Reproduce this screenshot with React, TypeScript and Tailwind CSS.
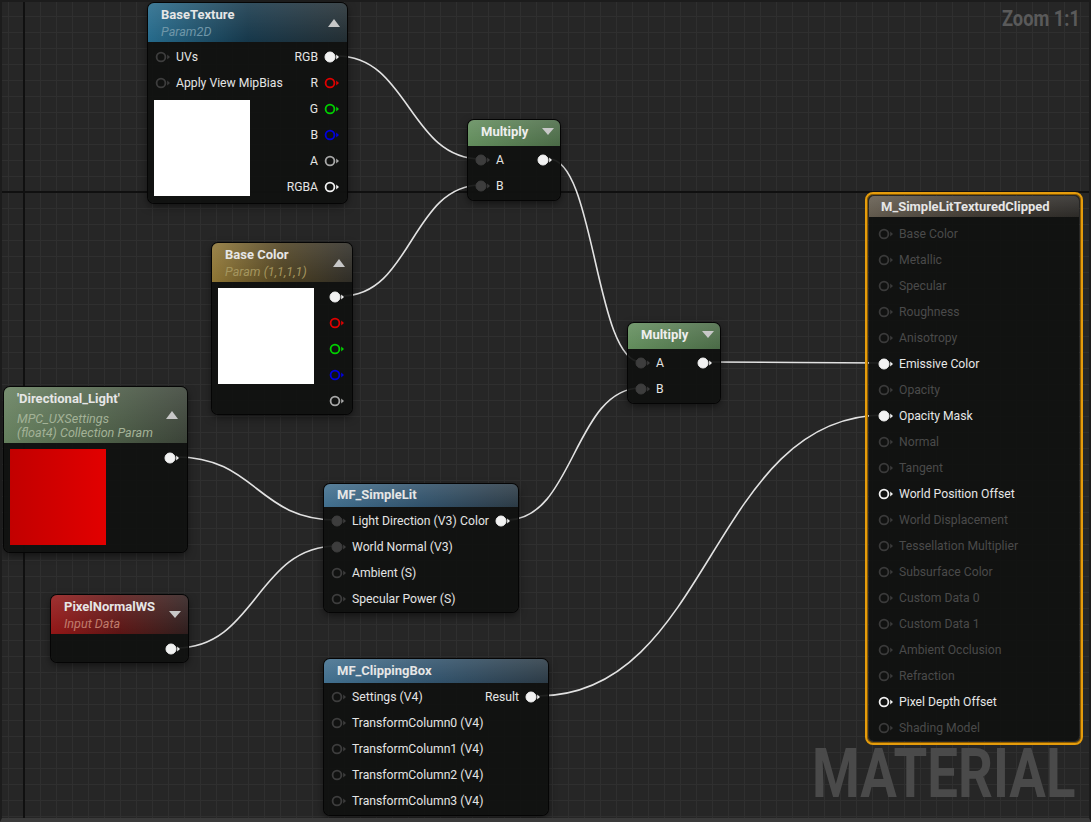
import React from 'react';

type PinProps = { color: string; filled?: boolean };

function Pin({ color, filled }: PinProps) {
  return (
    <svg width="16" height="12" viewBox="0 0 16 12" className="shrink-0">
      <circle
        cx="6"
        cy="6"
        r={filled ? 5 : 4.4}
        fill={filled ? color : 'none'}
        stroke={color}
        strokeWidth={filled ? 1 : 1.8}
      />
      <path d="M12.2 3.6 L15 6 L12.2 8.4 Z" fill={color} />
    </svg>
  );
}

const WHITE = '#f2f2f2';
const DIM = '#3d3d3d';

function InRow({ label, pin, dim }: { label: string; pin: React.ReactNode; dim?: boolean }) {
  return (
    <div className="flex h-[26px] items-center gap-[5px] pl-[7px]">
      {pin}
      <span className={dim ? 'text-[#4a4a4a]' : 'text-[#e4e4e4]'}>{label}</span>
    </div>
  );
}

function OutRow({ label, pin }: { label?: string; pin: React.ReactNode }) {
  return (
    <div className="flex h-[26px] items-center justify-end gap-[6px] pr-[7px]">
      {label && <span className="text-[#e4e4e4]">{label}</span>}
      {pin}
    </div>
  );
}

function Arrow({ up }: { up?: boolean }) {
  return (
    <svg width="12" height="8" viewBox="0 0 12 8" className="shrink-0">
      {up ? <path d="M0 8 L6 0 L12 8 Z" fill="#c4c4c4" /> : <path d="M0 0 L12 0 L6 7 Z" fill="#c4c4c4" />}
    </svg>
  );
}

function Node({ pos, children }: { pos: string; children: React.ReactNode }) {
  return (
    <div
      className={`absolute ${pos} rounded-[6px] bg-[#101110]/[0.93] shadow-[0_0_0_1px_#050505,0_3px_8px_rgba(0,0,0,0.55)]`}
    >
      {children}
    </div>
  );
}

// wire endpoints: output pin centre -> input pin centre
const wires: [number, number, number, number][] = [
  [337, 56, 481, 159],
  [342, 296, 481, 185],
  [549, 159, 641, 362],
  [507, 520, 641, 388],
  [710, 362, 884, 363],
  [176, 457, 337, 520],
  [176, 648, 337, 546],
  [538, 696, 884, 415],
];

function wirePath([x1, y1, x2, y2]: [number, number, number, number]) {
  const d = Math.max(Math.abs(x2 - x1) * 0.5, 30);
  return `M${x1} ${y1} C${x1 + d} ${y1} ${x2 - d} ${y2} ${x2} ${y2}`;
}

const materialInputs: { label: string; state: 'off' | 'linked' | 'open' }[] = [
  { label: 'Base Color', state: 'off' },
  { label: 'Metallic', state: 'off' },
  { label: 'Specular', state: 'off' },
  { label: 'Roughness', state: 'off' },
  { label: 'Anisotropy', state: 'off' },
  { label: 'Emissive Color', state: 'linked' },
  { label: 'Opacity', state: 'off' },
  { label: 'Opacity Mask', state: 'linked' },
  { label: 'Normal', state: 'off' },
  { label: 'Tangent', state: 'off' },
  { label: 'World Position Offset', state: 'open' },
  { label: 'World Displacement', state: 'off' },
  { label: 'Tessellation Multiplier', state: 'off' },
  { label: 'Subsurface Color', state: 'off' },
  { label: 'Custom Data 0', state: 'off' },
  { label: 'Custom Data 1', state: 'off' },
  { label: 'Ambient Occlusion', state: 'off' },
  { label: 'Refraction', state: 'off' },
  { label: 'Pixel Depth Offset', state: 'open' },
  { label: 'Shading Model', state: 'off' },
];

const gloss = 'pointer-events-none absolute inset-0 rounded-t-[6px] bg-linear-to-b from-white/12 to-transparent';

export default function App() {
  return (
    <div className="relative h-[822px] w-[1091px] overflow-hidden bg-[#262626] bg-[linear-gradient(to_right,#2f2f2f_1px,transparent_1px),linear-gradient(to_bottom,#2f2f2f_1px,transparent_1px)] bg-size-[16px_16px] bg-position-[8px_0px] font-['Roboto',sans-serif] text-[12.2px] text-[#e4e4e4]">
      {/* origin axes */}
      <div className="absolute left-[23px] top-0 h-full w-[2px] bg-[#101010]" />
      <div className="absolute left-0 top-[191px] h-[2px] w-full bg-[#101010]" />

      {/* watermarks */}
      <div className="absolute right-[11px] top-[8px] origin-right scale-x-[0.83] text-[22px] font-bold leading-none text-[#5a5a5a]">
        Zoom 1:1
      </div>
      <div className="absolute left-[812px] top-[739px] origin-left scale-x-[0.79] text-[69px] font-bold leading-none text-[#4a4a4a]">
        MATERIAL
      </div>

      {/* wires */}
      <svg className="pointer-events-none absolute inset-0" width="1091" height="822">
        {wires.map((w, i) => (
          <path key={i} d={wirePath(w)} fill="none" stroke="#e2e2e2" strokeWidth="1.6" />
        ))}
      </svg>

      {/* BaseTexture */}
      <Node pos="left-[148px] top-[3px] w-[199px] h-[200px]">
        <div className="relative flex h-[39px] items-center justify-between rounded-t-[6px] bg-linear-to-r from-[#256a8b] via-[#15374a] to-[#222d32] pl-[13px] pr-[7px]">
          <div className={gloss} />
          <div className="relative pt-[1px]">
            <div className="text-[13px] font-bold leading-[16px] text-[#e6e6e6]">BaseTexture</div>
            <div className="mt-[1px] text-[12.6px] italic leading-[16px] text-[#6f96a8]">Param2D</div>
          </div>
          <Arrow up />
        </div>
        <div className="flex pt-[2px]">
          <div className="flex-1">
            <InRow label="UVs" pin={<Pin color={DIM} />} />
            <InRow label="Apply View MipBias" pin={<Pin color={DIM} />} />
            <div className="ml-[6px] mt-[4px] h-[96px] w-[96px] bg-white" />
          </div>
          <div>
            <OutRow label="RGB" pin={<Pin color={WHITE} filled />} />
            <OutRow label="R" pin={<Pin color="#e00000" />} />
            <OutRow label="G" pin={<Pin color="#00d000" />} />
            <OutRow label="B" pin={<Pin color="#0000e0" />} />
            <OutRow label="A" pin={<Pin color="#a8a8a8" />} />
            <OutRow label="RGBA" pin={<Pin color={WHITE} />} />
          </div>
        </div>
      </Node>

      {/* Base Color */}
      <Node pos="left-[212px] top-[243px] w-[140px] h-[171px]">
        <div className="relative flex h-[39px] items-center justify-between rounded-t-[6px] bg-linear-to-r from-[#8e7534] via-[#4d401f] to-[#2e2c26] pl-[13px] pr-[7px]">
          <div className={gloss} />
          <div className="relative pt-[1px]">
            <div className="text-[13px] font-bold leading-[16px] text-[#e6e6e6]">Base Color</div>
            <div className="mt-[1px] text-[12.6px] italic leading-[16px] text-[#a4955e]">Param (1,1,1,1)</div>
          </div>
          <Arrow up />
        </div>
        <div className="flex pt-[2px]">
          <div className="flex-1">
            <div className="ml-[6px] mt-[4px] h-[96px] w-[96px] bg-white" />
          </div>
          <div>
            <OutRow pin={<Pin color={WHITE} filled />} />
            <OutRow pin={<Pin color="#e00000" />} />
            <OutRow pin={<Pin color="#00d000" />} />
            <OutRow pin={<Pin color="#0000e0" />} />
            <OutRow pin={<Pin color="#a8a8a8" />} />
          </div>
        </div>
      </Node>

      {/* Directional_Light */}
      <Node pos="left-[4px] top-[387px] w-[183px] h-[165px]">
        <div className="relative flex h-[56px] items-center justify-between rounded-t-[6px] bg-linear-to-r from-[#657f5d] via-[#4e6148] to-[#3a4237] pl-[13px] pr-[9px]">
          <div className={gloss} />
          <div className="relative pt-[1px]">
            <div className="text-[13px] font-bold leading-[16px] text-[#e6e6e6]">'Directional_Light'</div>
            <div className="mt-[5px] text-[12.6px] italic leading-[14px] text-[#a3b297]">
              MPC_UXSettings
              <br />
              (float4) Collection Param
            </div>
          </div>
          <Arrow up />
        </div>
        <div className="flex pt-[2px]">
          <div className="flex-1">
            <div className="ml-[6px] mt-[4px] h-[96px] w-[96px] bg-linear-to-r from-[#c20000] to-[#e20000]" />
          </div>
          <div>
            <OutRow pin={<Pin color={WHITE} filled />} />
          </div>
        </div>
      </Node>

      {/* PixelNormalWS */}
      <Node pos="left-[51px] top-[595px] w-[137px] h-[67px]">
        <div className="relative flex h-[39px] items-center justify-between rounded-t-[6px] bg-linear-to-r from-[#921616] via-[#5c1414] to-[#2e1d1d] pl-[13px] pr-[7px]">
          <div className={gloss} />
          <div className="relative pt-[1px]">
            <div className="text-[13px] font-bold leading-[16px] text-[#e6e6e6]">PixelNormalWS</div>
            <div className="mt-[1px] text-[12.6px] italic leading-[16px] text-[#c07c6c]">Input Data</div>
          </div>
          <Arrow />
        </div>
        <div className="pt-[2px]">
          <OutRow pin={<Pin color={WHITE} filled />} />
        </div>
      </Node>

      {/* Multiply 1 */}
      <Node pos="left-[468px] top-[120px] w-[92px] h-[80px]">
        <div className="relative flex h-[26px] items-start justify-between rounded-t-[6px] bg-linear-to-r from-[#628d5c] to-[#4a6a46] pl-[13px] pr-[6px] pt-[4px]">
          <div className={gloss} />
          <div className="relative text-[13px] font-bold leading-[16px] text-[#eeeeee]">Multiply</div>
          <div className="mt-[4px]">
            <Arrow />
          </div>
        </div>
        <div className="flex justify-between pt-[1px]">
          <InRow label="A" pin={<Pin color={DIM} filled />} />
          <OutRow pin={<Pin color={WHITE} filled />} />
        </div>
        <InRow label="B" pin={<Pin color={DIM} filled />} />
      </Node>

      {/* Multiply 2 */}
      <Node pos="left-[628px] top-[323px] w-[92px] h-[80px]">
        <div className="relative flex h-[26px] items-start justify-between rounded-t-[6px] bg-linear-to-r from-[#628d5c] to-[#4a6a46] pl-[13px] pr-[6px] pt-[4px]">
          <div className={gloss} />
          <div className="relative text-[13px] font-bold leading-[16px] text-[#eeeeee]">Multiply</div>
          <div className="mt-[4px]">
            <Arrow />
          </div>
        </div>
        <div className="flex justify-between pt-[1px]">
          <InRow label="A" pin={<Pin color={DIM} filled />} />
          <OutRow pin={<Pin color={WHITE} filled />} />
        </div>
        <InRow label="B" pin={<Pin color={DIM} filled />} />
      </Node>

      {/* MF_SimpleLit */}
      <Node pos="left-[324px] top-[484px] w-[194px] h-[128px]">
        <div className="relative h-[23px] rounded-t-[6px] bg-linear-to-r from-[#416f8e] via-[#30516a] to-[#2b3a45] pl-[13px] pt-[3px]">
          <div className={gloss} />
          <div className="relative text-[13px] font-bold leading-[16px] text-[#e6e6e6]">MF_SimpleLit</div>
        </div>
        <div className="flex justify-between pt-[1px]">
          <InRow label="Light Direction (V3)" pin={<Pin color={DIM} filled />} />
          <OutRow label="Color" pin={<Pin color={WHITE} filled />} />
        </div>
        <InRow label="World Normal (V3)" pin={<Pin color={DIM} filled />} />
        <InRow label="Ambient (S)" pin={<Pin color={DIM} />} />
        <InRow label="Specular Power (S)" pin={<Pin color={DIM} />} />
      </Node>

      {/* MF_ClippingBox */}
      <Node pos="left-[324px] top-[659px] w-[224px] h-[156px]">
        <div className="relative h-[24px] rounded-t-[6px] bg-linear-to-r from-[#416f8e] via-[#30516a] to-[#2b3a45] pl-[13px] pt-[4px]">
          <div className={gloss} />
          <div className="relative text-[13px] font-bold leading-[16px] text-[#e6e6e6]">MF_ClippingBox</div>
        </div>
        <div className="flex justify-between pt-[1px]">
          <InRow label="Settings (V4)" pin={<Pin color={DIM} />} />
          <OutRow label="Result" pin={<Pin color={WHITE} filled />} />
        </div>
        <InRow label="TransformColumn0 (V4)" pin={<Pin color={DIM} />} />
        <InRow label="TransformColumn1 (V4)" pin={<Pin color={DIM} />} />
        <InRow label="TransformColumn2 (V4)" pin={<Pin color={DIM} />} />
        <InRow label="TransformColumn3 (V4)" pin={<Pin color={DIM} />} />
      </Node>

      {/* Material result node, selected */}
      <div className="absolute left-[865px] top-[192px] h-[553px] w-[218px] rounded-[8px] border-2 border-[#e59c0c] p-[2px] shadow-[inset_0_0_0_1px_#8a5a00]">
        <div className="h-full rounded-[5px] bg-[#101110]/[0.93]">
          <div className="relative h-[21px] rounded-t-[5px] bg-linear-to-r from-[#625a4d] via-[#3f3932] to-[#2c2a27] pl-[12px] pt-[3px]">
            <div className="pointer-events-none absolute inset-0 rounded-t-[5px] bg-linear-to-b from-white/12 to-transparent" />
            <div className="relative text-[13px] font-bold leading-[16px] text-[#e6e6e6]">M_SimpleLitTexturedClipped</div>
          </div>
          <div className="pt-[4px]">
            {materialInputs.map((m) => (
              <div key={m.label} className="flex h-[26px] items-center gap-[5px] pl-[9px]">
                {m.state === 'off' && <Pin color="#3a3a3a" />}
                {m.state === 'linked' && <Pin color={WHITE} filled />}
                {m.state === 'open' && <Pin color={WHITE} />}
                <span className={m.state === 'off' ? 'text-[#4a4a4a]' : 'text-[#e6e6e6]'}>{m.label}</span>
              </div>
            ))}
          </div>
        </div>
      </div>

      {/* viewport frame */}
      <div className="pointer-events-none absolute inset-0 border-x-2 border-t-2 border-b-4 border-x-[#1c1c1c] border-t-[#1c1c1c] border-b-[#3a3a3a]" />
    </div>
  );
}
